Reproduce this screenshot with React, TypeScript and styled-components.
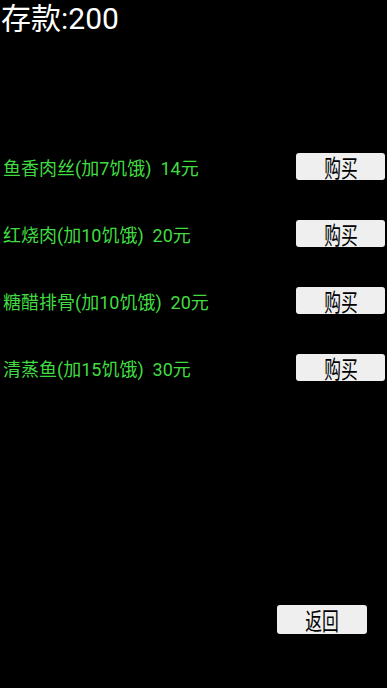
import React, { FC } from 'react';
import styled, { createGlobalStyle } from 'styled-components';

const GlobalStyle = createGlobalStyle`
  html, body {
    margin: 0;
    padding: 0;
    background-color: #000;
  }
`;

const Screen = styled.div`
  background-color: #000;
  display: flex;
  flex-direction: column;
  font-family: Roboto, "Noto Sans CJK SC", sans-serif;
  height: 688px;
  width: 387px;
  overflow: hidden;
  box-sizing: border-box;
  padding-bottom: 54px;
`;

const Balance = styled.div`
  color: #fff;
  font-size: 30px;
  line-height: 38px;
  padding-left: 1px;
`;

const FoodList = styled.div`
  display: flex;
  flex-direction: column;
  gap: 40px;
  margin-top: 115px;
`;

const FoodRow = styled.div`
  align-items: center;
  display: flex;
  height: 27px;
  justify-content: space-between;
  padding: 0 2px 0 3px;
`;

const FoodLabel = styled.span`
  color: #41dc41;
  font-size: 18px;
  white-space: pre;
`;

const Button = styled.button<{ tall?: boolean }>`
  align-items: center;
  background-color: #efefef;
  border: none;
  border-radius: 3px;
  display: flex;
  height: ${props => props.tall ? '29px' : '27px'};
  justify-content: center;
  padding: 0;
  width: ${props => props.tall ? '90px' : '89px'};
`;

const ButtonText = styled.span`
  color: #000;
  display: inline-block;
  font-family: "Noto Sans CJK SC", sans-serif;
  font-size: 24px;
  line-height: 24px;
  transform: scaleX(0.7);
`;

const Footer = styled.div`
  display: flex;
  justify-content: flex-end;
  margin-top: auto;
  padding-right: 20px;
`;

const foods = [
  '鱼香肉丝(加7饥饿)  14元',
  '红烧肉(加10饥饿)  20元',
  '糖醋排骨(加10饥饿)  20元',
  '清蒸鱼(加15饥饿)  30元',
];

const App: FC = () => (
  <Screen>
    <GlobalStyle />
    <Balance>存款:200</Balance>
    <FoodList>
      {foods.map((label, i) => (
        <FoodRow key={i}>
          <FoodLabel>{label}</FoodLabel>
          <Button>
            <ButtonText>购买</ButtonText>
          </Button>
        </FoodRow>
      ))}
    </FoodList>
    <Footer>
      <Button tall>
        <ButtonText>返回</ButtonText>
      </Button>
    </Footer>
  </Screen>
);

export default App;
